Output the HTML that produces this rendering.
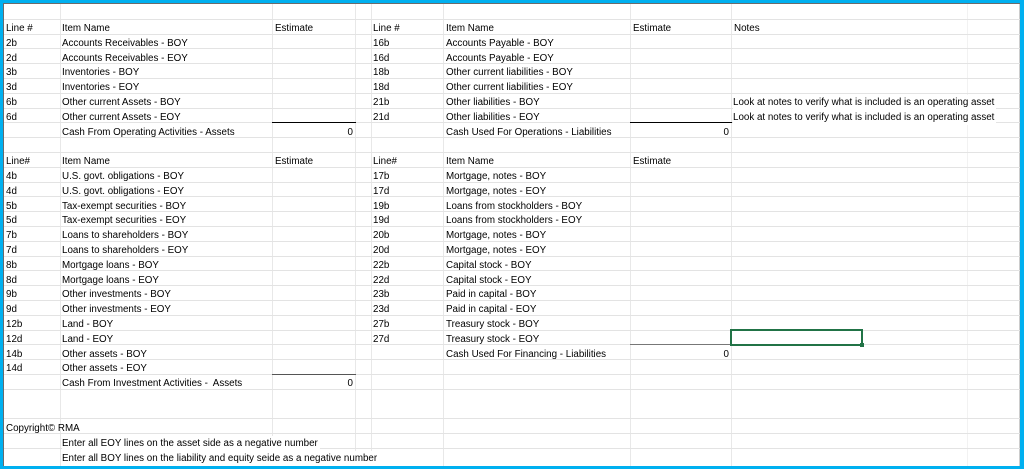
<!DOCTYPE html>
<html><head><meta charset="utf-8"><style>
*{margin:0;padding:0;box-sizing:border-box}
html,body{width:1024px;height:469px;overflow:hidden;background:#00b0f0}
#s{position:absolute;left:3px;top:3px;width:1017px;height:463px;background:#fff;border-left:1px solid #6b6b6b;border-top:1px solid #6b6b6b;overflow:hidden}
.h{position:absolute;left:0;width:1017px;height:1px;background:#e3e3e3}
.v{position:absolute;top:0;width:1px;height:463px;background:#e8e8e8}
.t{position:absolute;font:9.8px "Liberation Sans",sans-serif;line-height:15px;color:#000;white-space:nowrap;margin-top:2px}
.r{text-align:right}
.w{background:#fff;padding-right:2px}
.u{position:absolute;height:1px;background:#000}
</style></head><body><div id="s">
<div class="v" style="left:56px"></div><div class="v" style="left:268px"></div><div class="v" style="left:351px"></div><div class="v" style="left:367px"></div><div class="v" style="left:439px"></div><div class="v" style="left:626px"></div><div class="v" style="left:727px"></div><div class="v" style="left:963px;background:#f2f2f2"></div><div class="v" style="left:1015px;background:#ccc"></div>
<div class="h" style="top:14.8px"></div><div class="h" style="top:29.6px"></div><div class="h" style="top:44.4px"></div><div class="h" style="top:59.2px"></div><div class="h" style="top:74px"></div><div class="h" style="top:88.8px"></div><div class="h" style="top:103.6px"></div><div class="h" style="top:118.4px"></div><div class="h" style="top:133.2px"></div><div class="h" style="top:148px"></div><div class="h" style="top:162.8px"></div><div class="h" style="top:177.6px"></div><div class="h" style="top:192.4px"></div><div class="h" style="top:207.2px"></div><div class="h" style="top:222px"></div><div class="h" style="top:236.8px"></div><div class="h" style="top:251.6px"></div><div class="h" style="top:266.4px"></div><div class="h" style="top:281.2px"></div><div class="h" style="top:296px"></div><div class="h" style="top:310.8px"></div><div class="h" style="top:325.6px"></div><div class="h" style="top:340.4px"></div><div class="h" style="top:355.2px"></div><div class="h" style="top:370px"></div><div class="h" style="top:384.8px"></div><div class="h" style="top:414.4px"></div><div class="h" style="top:429.2px"></div><div class="h" style="top:444px"></div>

<div class="u" style="left:268px;width:84px;top:118px"></div>
<div class="u" style="left:626px;width:102px;top:118px"></div>
<div class="u" style="left:268px;width:84px;top:370px;background:#555"></div>
<div class="u" style="left:626px;width:102px;top:340px;background:#777"></div>
<div style="position:absolute;left:726px;top:325px;width:133px;height:17px;border:2px solid #217346"></div>
<div style="position:absolute;left:856px;top:339px;width:4px;height:4px;background:#217346"></div>

<div class="t" style="left:2px;top:15px">Line #</div><div class="t" style="left:58px;top:15px">Item Name</div><div class="t" style="left:271px;top:15px">Estimate</div><div class="t" style="left:369px;top:15px">Line #</div><div class="t" style="left:442px;top:15px">Item Name</div><div class="t" style="left:629px;top:15px">Estimate</div><div class="t" style="left:730px;top:15px">Notes</div>
<div class="t" style="left:2px;top:30px">2b</div><div class="t" style="left:58px;top:30px">Accounts Receivables - BOY</div><div class="t" style="left:369px;top:30px">16b</div><div class="t" style="left:442px;top:30px">Accounts Payable - BOY</div>
<div class="t" style="left:2px;top:45px">2d</div><div class="t" style="left:58px;top:45px">Accounts Receivables - EOY</div><div class="t" style="left:369px;top:45px">16d</div><div class="t" style="left:442px;top:45px">Accounts Payable - EOY</div>
<div class="t" style="left:2px;top:59px">3b</div><div class="t" style="left:58px;top:59px">Inventories - BOY</div><div class="t" style="left:369px;top:59px">18b</div><div class="t" style="left:442px;top:59px">Other current liabilities - BOY</div>
<div class="t" style="left:2px;top:74px">3d</div><div class="t" style="left:58px;top:74px">Inventories - EOY</div><div class="t" style="left:369px;top:74px">18d</div><div class="t" style="left:442px;top:74px">Other current liabilities - EOY</div>
<div class="t" style="left:2px;top:89px">6b</div><div class="t" style="left:58px;top:89px">Other current Assets - BOY</div><div class="t" style="left:369px;top:89px">21b</div><div class="t" style="left:442px;top:89px">Other liabilities - BOY</div><div class="t w" style="left:729px;top:89px">Look at notes to verify what is included is an operating asset</div>
<div class="t" style="left:2px;top:104px">6d</div><div class="t" style="left:58px;top:104px">Other current Assets - EOY</div><div class="t" style="left:369px;top:104px">21d</div><div class="t" style="left:442px;top:104px">Other liabilities - EOY</div><div class="t w" style="left:729px;top:104px">Look at notes to verify what is included is an operating asset</div>
<div class="t" style="left:58px;top:119px">Cash From Operating Activities - Assets</div><div class="t r" style="left:268px;width:81px;top:119px">0</div><div class="t" style="left:442px;top:119px">Cash Used For Operations - Liabilities</div><div class="t r" style="left:626px;width:99px;top:119px">0</div>

<div class="t" style="left:2px;top:148px">Line#</div><div class="t" style="left:58px;top:148px">Item Name</div><div class="t" style="left:271px;top:148px">Estimate</div><div class="t" style="left:369px;top:148px">Line#</div><div class="t" style="left:442px;top:148px">Item Name</div><div class="t" style="left:629px;top:148px">Estimate</div>
<div class="t" style="left:2px;top:163px">4b</div><div class="t" style="left:58px;top:163px">U.S. govt. obligations - BOY</div><div class="t" style="left:369px;top:163px">17b</div><div class="t" style="left:442px;top:163px">Mortgage, notes - BOY</div>
<div class="t" style="left:2px;top:178px">4d</div><div class="t" style="left:58px;top:178px">U.S. govt. obligations - EOY</div><div class="t" style="left:369px;top:178px">17d</div><div class="t" style="left:442px;top:178px">Mortgage, notes - EOY</div>
<div class="t" style="left:2px;top:193px">5b</div><div class="t" style="left:58px;top:193px">Tax-exempt securities - BOY</div><div class="t" style="left:369px;top:193px">19b</div><div class="t" style="left:442px;top:193px">Loans from stockholders - BOY</div>
<div class="t" style="left:2px;top:207px">5d</div><div class="t" style="left:58px;top:207px">Tax-exempt securities - EOY</div><div class="t" style="left:369px;top:207px">19d</div><div class="t" style="left:442px;top:207px">Loans from stockholders - EOY</div>
<div class="t" style="left:2px;top:222px">7b</div><div class="t" style="left:58px;top:222px">Loans to shareholders - BOY</div><div class="t" style="left:369px;top:222px">20b</div><div class="t" style="left:442px;top:222px">Mortgage, notes - BOY</div>
<div class="t" style="left:2px;top:237px">7d</div><div class="t" style="left:58px;top:237px">Loans to shareholders - EOY</div><div class="t" style="left:369px;top:237px">20d</div><div class="t" style="left:442px;top:237px">Mortgage, notes - EOY</div>
<div class="t" style="left:2px;top:252px">8b</div><div class="t" style="left:58px;top:252px">Mortgage loans - BOY</div><div class="t" style="left:369px;top:252px">22b</div><div class="t" style="left:442px;top:252px">Capital stock - BOY</div>
<div class="t" style="left:2px;top:267px">8d</div><div class="t" style="left:58px;top:267px">Mortgage loans - EOY</div><div class="t" style="left:369px;top:267px">22d</div><div class="t" style="left:442px;top:267px">Capital stock - EOY</div>
<div class="t" style="left:2px;top:281px">9b</div><div class="t" style="left:58px;top:281px">Other investments - BOY</div><div class="t" style="left:369px;top:281px">23b</div><div class="t" style="left:442px;top:281px">Paid in capital - BOY</div>
<div class="t" style="left:2px;top:296px">9d</div><div class="t" style="left:58px;top:296px">Other investments - EOY</div><div class="t" style="left:369px;top:296px">23d</div><div class="t" style="left:442px;top:296px">Paid in capital - EOY</div>
<div class="t" style="left:2px;top:311px">12b</div><div class="t" style="left:58px;top:311px">Land - BOY</div><div class="t" style="left:369px;top:311px">27b</div><div class="t" style="left:442px;top:311px">Treasury stock - BOY</div>
<div class="t" style="left:2px;top:326px">12d</div><div class="t" style="left:58px;top:326px">Land - EOY</div><div class="t" style="left:369px;top:326px">27d</div><div class="t" style="left:442px;top:326px">Treasury stock - EOY</div>
<div class="t" style="left:2px;top:341px">14b</div><div class="t" style="left:58px;top:341px">Other assets - BOY</div><div class="t" style="left:442px;top:341px">Cash Used For Financing - Liabilities</div><div class="t r" style="left:626px;width:99px;top:341px">0</div>
<div class="t" style="left:2px;top:355px">14d</div><div class="t" style="left:58px;top:355px">Other assets - EOY</div>
<div class="t" style="left:58px;top:370px">Cash From Investment Activities -&nbsp; Assets</div><div class="t r" style="left:268px;width:81px;top:370px">0</div>
<div class="t" style="left:2px;top:415px">Copyright© RMA</div>
<div class="t w" style="left:58px;top:430px">Enter all EOY lines on the asset side as a negative number</div>
<div class="t w" style="left:58px;top:445px">Enter all BOY lines on the liability and equity seide as a negative number</div>
</div></body></html>
